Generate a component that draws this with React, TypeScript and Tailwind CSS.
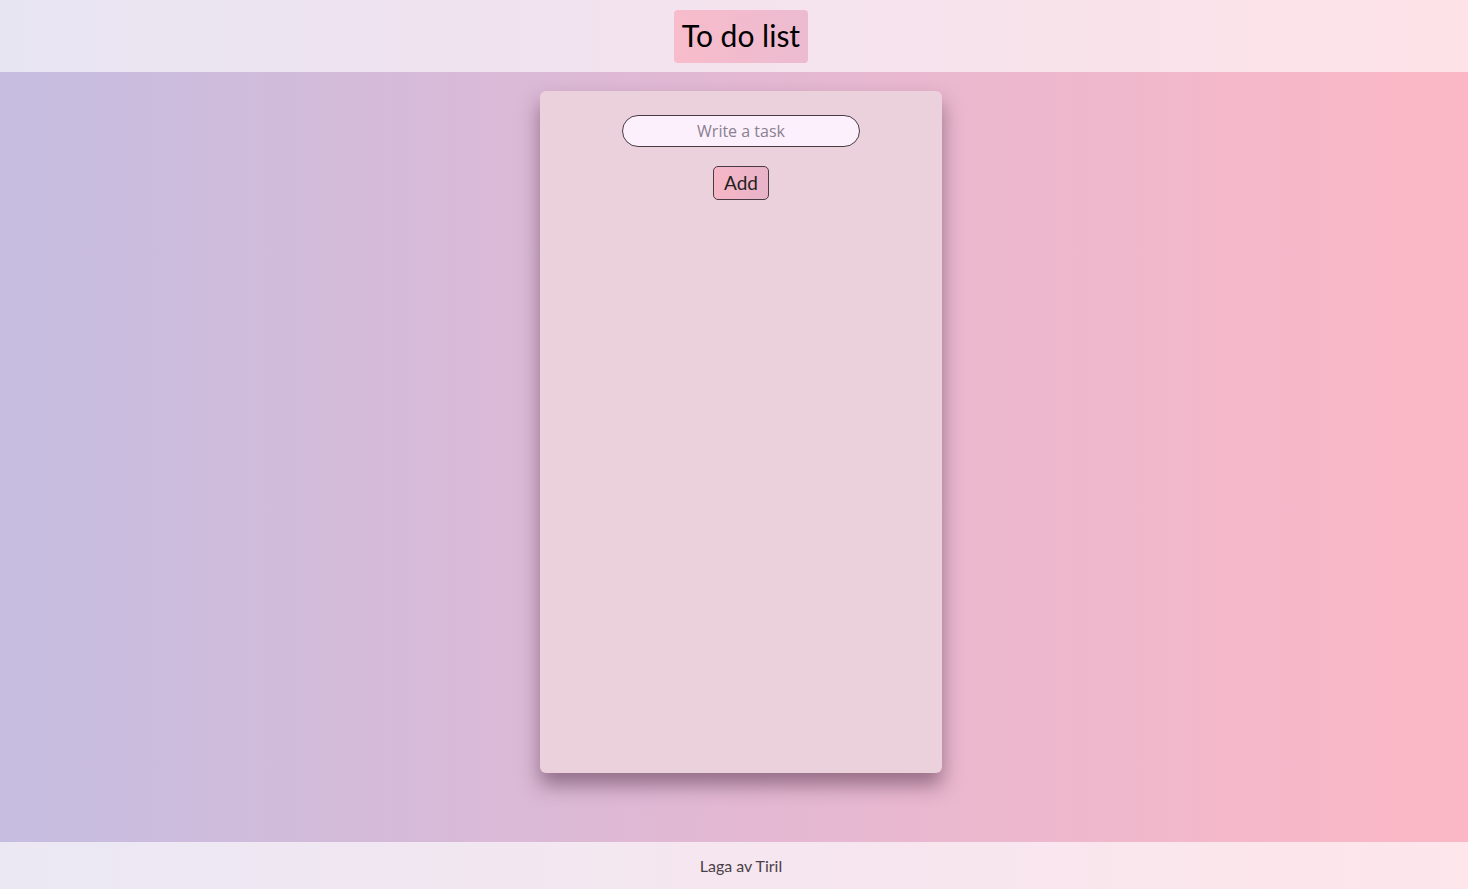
export default function App() {
  return (
    <div className="flex min-h-screen flex-col bg-gradient-to-r from-[#c5bde0] via-[#e3b8d3] to-[#fbb7c5] font-['Lato',sans-serif]">
      <header className="flex h-[72px] items-center justify-center bg-white/60 pl-[14px]">
        <h1 className="rounded-[4px] bg-gradient-to-r from-[#f8bccb] to-[#ecbbd0] px-[8px] pt-[5px] pb-[8px] text-[30px] leading-[40px] text-black">
          To do list
        </h1>
      </header>

      <main className="flex flex-1 justify-center pt-[19px] pb-[69px] pl-[14px]">
        <div className="flex h-[682px] w-[402px] flex-col items-center rounded-[6px] bg-[#ebd1dc] pt-[24px] shadow-[0_12px_20px_rgba(70,35,60,0.5)]">
          <input
            type="text"
            placeholder="Write a task"
            className="h-[32px] w-[238px] rounded-full border border-[#4a3a44] bg-[#fcf0fd] px-4 text-center font-['Open_Sans',sans-serif] text-[16px] text-[#333] placeholder:text-[#8a8090] focus:outline-none"
          />
          <button className="mt-[19px] h-[34px] w-[56px] rounded-[5px] border border-[#4a3a44] bg-gradient-to-r from-[#f6b6c6] to-[#e8b3c8] text-[19px] text-[#222]">
            Add
          </button>
        </div>
      </main>

      <footer className="flex h-[47px] items-center justify-center bg-white/65 pt-[1px] pl-[14px] text-[16px] text-[#4a4048]">
        Laga av Tiril
      </footer>
    </div>
  )
}
